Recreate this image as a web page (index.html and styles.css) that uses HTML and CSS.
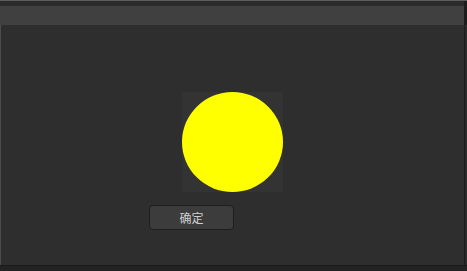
FILE: index.html
```html
<!DOCTYPE html>
<html lang="zh">

<head>
    <meta charset="UTF-8">
    <meta name="viewport" content="width=device-width, initial-scale=1.0">
    <title>确定</title>
    <link rel="stylesheet" href="styles.css">
</head>

<body>
    <div class="window">
        <div class="top-line"></div>
        <div class="top-gap"></div>
        <div class="toolbar"></div>
        <div class="main">
            <div class="content">
                <div class="preview">
                    <div class="sun"></div>
                </div>
                <button class="ok-button">确定</button>
            </div>
            <div class="side"></div>
        </div>
        <div class="bottom-bar"></div>
    </div>
</body>

</html>
```

FILE: styles.css
```css
body {
    margin: 0;
    background: #2e2e2e;
    font-family: "Noto Sans CJK SC", "Noto Sans", sans-serif;
}

.window {
    display: flex;
    flex-direction: column;
    width: 467px;
    height: 271px;
    overflow: hidden;
}

.top-line {
    height: 1px;
    background: #5e5e5e;
}

.top-gap {
    height: 5px;
    background: #2b2b2b;
    border-right: 3px solid #1c1c1c;
}

.toolbar {
    height: 19px;
    background: #404040;
    border-right: 3px solid #1c1c1c;
}

.main {
    flex: 1;
    display: flex;
    border-bottom: 1px solid #1b1b1b;
}

.content {
    flex: 1;
    display: flex;
    flex-direction: column;
    align-items: flex-start;
    padding-top: 67px;
    background: #2e2e2e;
    border-left: 1px solid #4c4c4c;
    border-right: 1px solid #1c1c1c;
}

.side {
    width: 2px;
    background: #2a2a2a;
}

.preview {
    width: 101px;
    height: 100px;
    margin-left: 181px;
    background: #333333;
}

.sun {
    width: 101px;
    height: 100px;
    border-radius: 50%;
    background: #ffff00;
}

.ok-button {
    width: 85px;
    height: 25px;
    margin-top: 13px;
    margin-left: 148px;
    padding: 0;
    background: #3c3c3c;
    border: 1px solid #1e1e1e;
    border-radius: 4px;
    color: #cfcfcf;
    font-family: "Noto Sans CJK SC", sans-serif;
    font-size: 12px;
    line-height: 23px;
}

.bottom-bar {
    height: 5px;
    background: #232323;
}
```
